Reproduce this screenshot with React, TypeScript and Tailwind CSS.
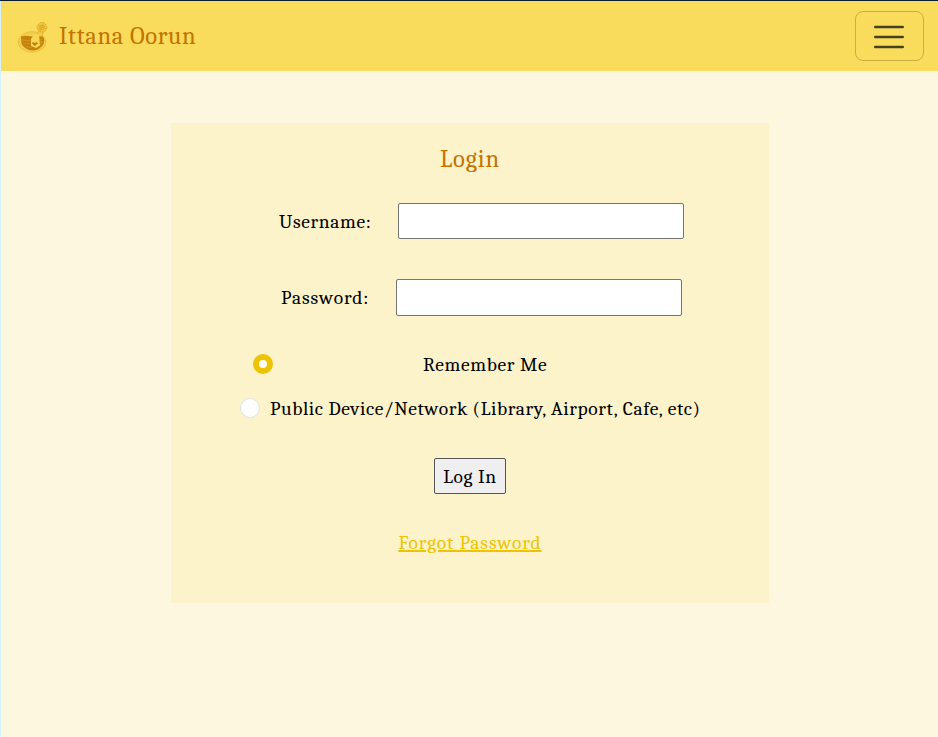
import type { ReactNode } from 'react';

function Logo() {
  return (
    <svg width="32" height="32" viewBox="0 0 32 32" fill="none" className="mt-1 shrink-0">
      <ellipse cx="15" cy="20" rx="13.800" ry="10.300" stroke="#e6b93a" strokeWidth="0.9" />
      <ellipse cx="15" cy="20" rx="12.500" ry="9.200" fill="#f5d252" stroke="#e9bf3e" strokeWidth="0.6" />
      <path d="M20 14.500l1.500-6 5 1-2 6Z" fill="#f1cb48" stroke="#e0ae2c" strokeWidth="0.8" />
      <path d="M4 14.500Q9 13 15 14.500L26 14.500Q28.500 19 26 23Q22 28.500 15 28.500Q7 27.500 4.500 21.500Z" fill="#c4830b" />
      <path d="M5 18l9 1M6 21l8 1M8 24.500l7 1M24 16.500v7M23 20.500l4-.5" stroke="#dba526" strokeWidth="0.6" />
      <path d="M14 17L17 12.500h5l1 11-4 2.500-5-2Z" fill="#f6d755" />
      <path d="M17.800 24l-3-2.800q1.300-2.100 3 0 1.900-2.100 3.200 0Z" fill="#c07c05" />
      <circle cx="25" cy="5.300" r="4.800" fill="#f0c840" stroke="#dfaa27" strokeWidth="1" strokeDasharray="2 .8" />
      <circle cx="25" cy="5.300" r="2.200" stroke="#dba31d" strokeWidth="0.8" />
      <path d="M21 3l8 4M23 9l4-8M21 7l7-3" stroke="#dfa91f" strokeWidth="0.7" />
    </svg>
  );
}

function Field({ label, type, height }: { label: ReactNode; type: string; height: string }) {
  return (
    <div className="flex items-center">
      {label}
      <input type={type} className={`w-[286px] ${height} rounded-[2px] border border-[#767676] bg-white`} />
    </div>
  );
}

export default function App() {
  return (
    <div className="h-[737px] w-[938px] overflow-hidden border-t border-[#0a1c33] bg-[#fdf7e0] font-['Cambria','Caladea','DejaVu_Serif_Condensed','DejaVu_Serif',serif] text-[19.5px] leading-7 text-black">
      <div className="h-full border-l border-[#d3f1ff]">
        <nav className="flex h-[70px] items-center justify-between bg-[#f9dc5c] pr-[14px] pl-4">
          <div className="flex items-center gap-[10px]">
            <Logo />
            <span className="text-[24.5px] leading-8 tracking-[0.65px] whitespace-nowrap text-[#c47200]">Ittana Oorun</span>
          </div>
          <button className="flex h-[50px] w-[69px] items-center justify-center rounded-[8px] border border-[#c9ae42] pr-px">
            <svg width="30" height="24" viewBox="0 0 30 24" stroke="#45421f" strokeWidth="2.400" strokeLinecap="round" className="mt-px">
              <path d="M1.200 2h27.600M1.200 12h27.600M1.200 22h27.600" />
            </svg>
          </button>
        </nav>
        <main className="mt-[52px] ml-[170px] flex h-[480px] w-[598px] flex-col items-center bg-[#fdf3cb]">
          <h1 className="mt-5 h-8 text-[24.5px] leading-8 tracking-[0.9px] whitespace-nowrap text-[#c47200]">Login</h1>
          <div className="mt-7 flex h-[113px] w-full flex-col justify-between">
            <Field type="text" height="h-9" label={<label className="mt-0.5 ml-[108px] w-[119px] tracking-[0.6px] whitespace-nowrap">Username:</label>} />
            <Field type="password" height="h-[37px]" label={<label className="mt-px ml-[110px] w-[115px] tracking-[0.9px] whitespace-nowrap">Password:</label>} />
          </div>
          <div className="mt-[38px] flex h-5 w-full items-center pl-[82px]">
            <span className="h-5 w-5 rounded-full border-[6px] border-[#edc303] bg-white" />
            <label className="mt-0.5 ml-[150px] tracking-[0.65px] whitespace-nowrap">Remember Me</label>
          </div>
          <div className="mt-6 flex h-5 w-full items-center pl-[69px]">
            <span className="h-5 w-5 rounded-full border border-[#dee2e6] bg-white" />
            <label className="mt-0.5 ml-[10px] tracking-[0.59px] whitespace-nowrap">Public Device/Network (Library, Airport, Cafe, etc)</label>
          </div>
          <button className="mt-10 h-9 w-[72px] rounded-[2px] border border-[#555] bg-[#efefef] pt-0.5 tracking-[0.6px] whitespace-nowrap">Log In</button>
          <a className="mt-[35px] tracking-[0.88px] whitespace-nowrap text-[#edc303] underline decoration-2 underline-offset-1">Forgot Password</a>
        </main>
      </div>
    </div>
  );
}
